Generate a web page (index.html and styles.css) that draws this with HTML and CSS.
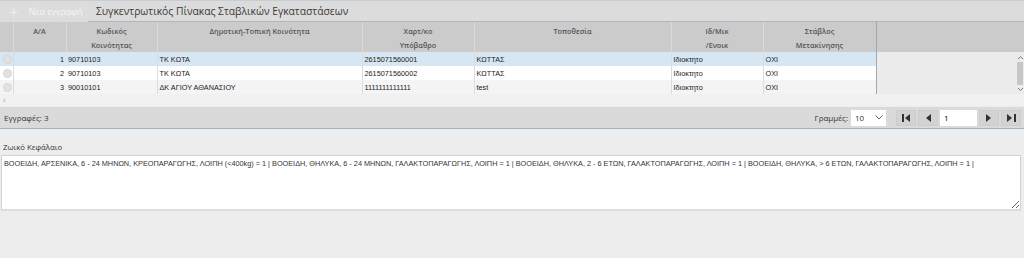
FILE: index.html
```html
<!DOCTYPE html>
<html lang="el">
<head>
    <meta charset="UTF-8">
    <meta name="viewport" content="width=device-width, initial-scale=1.0">
    <title>Σταβλικές Εγκαταστάσεις</title>
    <link rel="stylesheet" href="styles.css">
</head>
<body>

    <div class="toolbar">
        <button class="new-btn" disabled><span class="plus">+</span>Νέα εγγραφή</button>
        <div class="tab-title">Συγκεντρωτικός Πίνακας Σταβλικών Εγκαταστάσεων</div>
    </div>

    <div class="grid">
        <div class="grid-head">
            <table class="grid-table">
                <colgroup>
                    <col class="c-sel"><col class="c-aa"><col class="c-code"><col class="c-comm">
                    <col class="c-map"><col class="c-loc"><col class="c-own"><col class="c-stable">
                </colgroup>
                <thead>
                    <tr>
                        <th></th>
                        <th>A/A</th>
                        <th>Κωδικός<br>Κοινότητας</th>
                        <th>Δημοτική-Τοπική Κοινότητα</th>
                        <th>Χαρτ/κο<br>Υπόβαθρο</th>
                        <th>Τοποθεσία</th>
                        <th>Ιδ/Μικ<br>/Ενοικ</th>
                        <th>Στάβλος<br>Μετακίνησης</th>
                    </tr>
                </thead>
            </table>
            <div class="head-filler"></div>
        </div>

        <div class="grid-body">
            <table class="grid-table">
                <colgroup>
                    <col class="c-sel"><col class="c-aa"><col class="c-code"><col class="c-comm">
                    <col class="c-map"><col class="c-loc"><col class="c-own"><col class="c-stable">
                </colgroup>
                <tbody>
                    <tr class="selected">
                        <td><span class="radio"></span></td>
                        <td class="num">1</td>
                        <td>90710103</td>
                        <td>ΤΚ ΚΩΤΑ</td>
                        <td>2615071560001</td>
                        <td>ΚΩΤΤΑΣ</td>
                        <td>Ιδιοκτητο</td>
                        <td>ΟΧΙ</td>
                    </tr>
                    <tr>
                        <td><span class="radio"></span></td>
                        <td class="num">2</td>
                        <td>90710103</td>
                        <td>ΤΚ ΚΩΤΑ</td>
                        <td>2615071560002</td>
                        <td>ΚΩΤΤΑΣ</td>
                        <td>Ιδιοκτητο</td>
                        <td>ΟΧΙ</td>
                    </tr>
                    <tr class="alt">
                        <td><span class="radio"></span></td>
                        <td class="num">3</td>
                        <td>90010101</td>
                        <td>ΔΚ ΑΓΙΟΥ ΑΘΑΝΑΣΙΟΥ</td>
                        <td>1111111111111</td>
                        <td>test</td>
                        <td>Ιδιοκτητο</td>
                        <td>ΟΧΙ</td>
                    </tr>
                </tbody>
            </table>
            <div class="body-filler"></div>
            <div class="vscroll">
                <svg width="7" height="5" viewBox="0 0 7 5"><path d="M1 4 L3.5 1.5 L6 4" fill="none" stroke="#777" stroke-width="1"/></svg>
                <span class="thumb"></span>
                <svg width="7" height="5" viewBox="0 0 7 5"><path d="M1 1 L3.5 3.5 L6 1" fill="none" stroke="#777" stroke-width="1"/></svg>
            </div>
        </div>

        <div class="hscroll">&lsaquo;</div>
    </div>

    <div class="grid-footer">
        <span class="count">Εγγραφές: 3</span>
        <div class="pager">
            <label for="rows">Γραμμές:</label>
            <div class="rows-select">
                <span>10</span>
                <svg width="8" height="5" viewBox="0 0 8 5"><path d="M0.5 0.5 L4 4 L7.5 0.5" fill="none" stroke="#666" stroke-width="1"/></svg>
            </div>
            <button class="pg-btn"><svg width="9" height="8" viewBox="0 0 9 8"><rect x="0" y="0" width="2" height="8" fill="#333"/><path d="M8 0 L3 4 L8 8 Z" fill="#333"/></svg></button>
            <button class="pg-btn"><svg width="6" height="8" viewBox="0 0 6 8"><path d="M6 0 L1 4 L6 8 Z" fill="#333"/></svg></button>
            <input class="page-input" type="text" value="1">
            <button class="pg-btn"><svg width="6" height="8" viewBox="0 0 6 8"><path d="M0 0 L5 4 L0 8 Z" fill="#333"/></svg></button>
            <button class="pg-btn"><svg width="9" height="8" viewBox="0 0 9 8"><path d="M0 0 L5 4 L0 8 Z" fill="#333"/><rect x="7" y="0" width="2" height="8" fill="#333"/></svg></button>
        </div>
    </div>

    <div class="section">
        <div class="section-label">Ζωικό Κεφάλαιο</div>
        <textarea class="livestock" readonly>ΒΟΟΕΙΔΗ, ΑΡΣΕΝΙΚΑ, 6 - 24 ΜΗΝΩΝ, ΚΡΕΟΠΑΡΑΓΩΓΗΣ, ΛΟΙΠΗ (&lt;400kg) = 1 | ΒΟΟΕΙΔΗ, ΘΗΛΥΚΑ, 6 - 24 ΜΗΝΩΝ, ΓΑΛΑΚΤΟΠΑΡΑΓΩΓΗΣ, ΛΟΙΠΗ = 1 | ΒΟΟΕΙΔΗ, ΘΗΛΥΚΑ, 2 - 6 ΕΤΩΝ, ΓΑΛΑΚΤΟΠΑΡΑΓΩΓΗΣ, ΛΟΙΠΗ = 1 | ΒΟΟΕΙΔΗ, ΘΗΛΥΚΑ, &gt; 6 ΕΤΩΝ, ΓΑΛΑΚΤΟΠΑΡΑΓΩΓΗΣ, ΛΟΙΠΗ = 1 |</textarea>
    </div>

</body>
</html>
```

FILE: styles.css
```css
body {
    margin: 0;
    background-color: #ededed;
    font-family: "Open Sans", "Noto Sans", sans-serif;
    color: #333;
}

/* barre du haut */
.toolbar {
    display: flex;
    height: 21px;
    background-color: #dcdcdc;
    border-top: 1px solid #c3cfd8;
}

.new-btn {
    display: flex;
    align-items: center;
    width: 88px;
    padding: 0 0 0 9px;
    background: none;
    border: none;
    color: #f6f6f6;
    font-family: inherit;
    font-size: 8.8px;
}

.plus {
    font-size: 17px;
    font-weight: 300;
    line-height: 17px;
    margin-right: 10px;
}

.tab-title {
    flex: 1;
    padding: 3px 0 0 8px;
    font-size: 10.3px;
    color: #3a3a3a;
    border-bottom: 1px solid #a9b8c4;
}

/* grille */
.grid-head, .grid-body {
    display: flex;
}

.grid-table {
    width: 876px;
    flex-shrink: 0;
    table-layout: fixed;
    border-collapse: collapse;
}

.c-sel { width: 13px; }
.c-aa { width: 53px; }
.c-code { width: 91px; }
.c-comm { width: 205px; }
.c-map { width: 112px; }
.c-loc { width: 197px; }
.c-own { width: 92px; }
.c-stable { width: 113px; }

.grid-head {
    height: 30px;
    background-color: #cbcbcb;
}

th {
    height: 30px;
    padding: 2px 2px 0;
    vertical-align: top;
    font-size: 7.3px;
    font-weight: 600;
    line-height: 14px;
    color: #555;
    border-right: 1px solid #dadada;
}

th:last-child {
    border-right-color: #a8a8a8;
}

.head-filler {
    flex: 1;
}

.grid-body {
    height: 42px;
    background-color: #ececec;
}

td {
    height: 14px;
    padding: 0 2px;
    font-family: "Liberation Sans", Arial, sans-serif;
    font-size: 7.3px;
    color: #222;
    white-space: nowrap;
    overflow: hidden;
    border-right: 1px solid #dcdcdc;
}

td:last-child {
    border-right-color: #a8a8a8;
}

tbody tr {
    background-color: #fff;
}

tbody tr.selected {
    background-color: #d6e7f3;
}

tbody tr.alt {
    background-color: #f4f4f4;
}

td.num {
    text-align: right;
    border-right: none;
}

.radio {
    display: block;
    width: 7px;
    height: 7px;
    margin-left: 1px;
    border-radius: 50%;
    background-color: #e2e2e2;
    border: 1px solid #d4d4d4;
}

.body-filler {
    flex: 1;
}

.vscroll {
    display: flex;
    flex-direction: column;
    align-items: center;
    flex-shrink: 0;
    width: 8px;
    padding: 3px 0 2px;
    box-sizing: border-box;
    gap: 2px;
}

.vscroll .thumb {
    display: block;
    width: 6px;
    flex: 1;
    background-color: #c6c6c6;
}

.hscroll {
    height: 12px;
    padding-left: 3px;
    font-size: 9px;
    line-height: 11px;
    color: #aaa;
    background-color: #f1f1f1;
}

/* pied de grille */
.grid-footer {
    display: flex;
    align-items: center;
    justify-content: space-between;
    height: 21px;
    margin-top: 1px;
    padding: 0 2px 0 4px;
    background-color: #dadada;
    border-bottom: 1px solid #9fb5c6;
    font-size: 8px;
}

.pager {
    display: flex;
    align-items: center;
}

.pager label {
    margin-right: 3px;
}

.rows-select {
    display: flex;
    align-items: center;
    justify-content: space-between;
    width: 28px;
    height: 16px;
    padding: 0 3px 0 4px;
    margin-right: 9px;
    background-color: #fff;
    font-size: 8px;
}

.pg-btn {
    display: flex;
    align-items: center;
    justify-content: center;
    width: 20px;
    height: 16px;
    margin: 0 1px;
    padding: 0;
    background-color: #d3d3d3;
    border: 1px solid #cdcdcd;
}

.page-input {
    width: 37px;
    height: 16px;
    box-sizing: border-box;
    padding: 0 4px;
    margin: 0 1px;
    border: none;
    font-family: inherit;
    font-size: 8px;
}

/* zone Ζωικό Κεφάλαιο */
.section {
    padding: 13px 3px 0 1px;
}

.section-label {
    padding-left: 2px;
    margin-bottom: 3px;
    font-size: 7.8px;
}

.livestock {
    display: block;
    width: 100%;
    height: 56px;
    box-sizing: border-box;
    padding: 3px 2px;
    border: 1px solid #d2d2d2;
    border-bottom: 2px solid #dcdcdc;
    font-family: "Liberation Sans", Arial, sans-serif;
    font-size: 7.3px;
    color: #333;
    resize: both;
}
```
